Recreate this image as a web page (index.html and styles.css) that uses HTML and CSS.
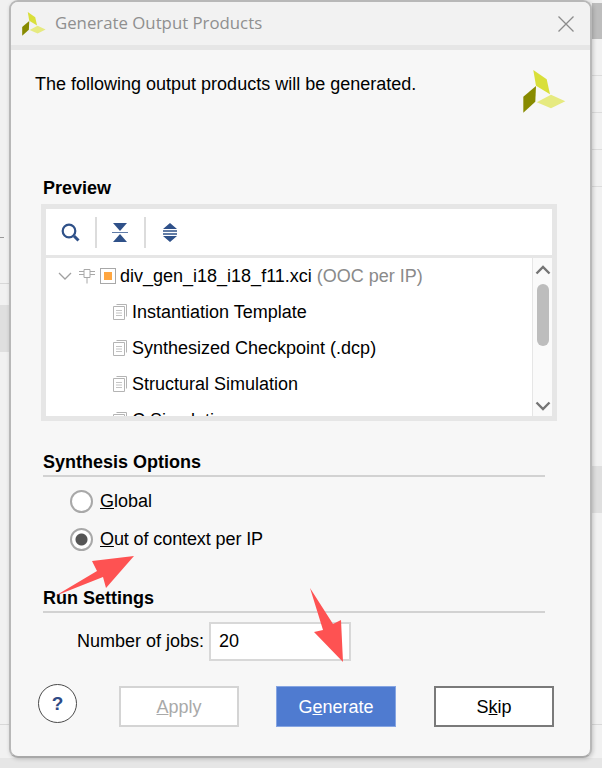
FILE: index.html
```html
<!DOCTYPE html>
<html lang="en">
<head>
	<meta charset="UTF-8">
	<title>Generate Output Products</title>
	<link rel="stylesheet" href="styles.css">
</head>
<body>
	<div class="dialog">
		<div class="titlebar">
			<svg class="title-logo" viewBox="0 0 43 43">
				<polygon fill="#d9df3a" points="10.3,0 23.7,9.3 27,24.3 13,15.7"/>
				<polygon fill="#878a00" points="13,16 12.3,31.7 .3,42.7 .3,26.7"/>
				<polygon fill="#e6ea80" points="13.7,32.3 28,24.7 42.3,31.3 28,38.3"/>
			</svg>
			<span class="title-text">Generate Output Products</span>
			<svg class="close-icon" viewBox="0 0 16 16">
				<path d="M0.5 0.5L15.5 15.5M15.5 0.5L0.5 15.5" stroke="#8c8c8c" stroke-width="1.3" fill="none"/>
			</svg>
		</div>

		<div class="content">
			<div class="intro">
				<p>The following output products will be generated.</p>
				<svg class="big-logo" viewBox="0 0 43 43">
					<polygon fill="#d9df3a" points="10.3,0 23.7,9.3 27,24.3 13,15.7"/>
					<polygon fill="#878a00" points="13,16 12.3,31.7 .3,42.7 .3,26.7"/>
					<polygon fill="#e6ea80" points="13.7,32.3 28,24.7 42.3,31.3 28,38.3"/>
				</svg>
			</div>

			<h2 class="preview-title">Preview</h2>
			<div class="preview">
				<div class="toolbar">
					<svg class="tool" viewBox="0 0 19 19">
						<circle cx="8" cy="8" r="6.3" fill="none" stroke="#2f5189" stroke-width="2.2"/>
						<path d="M13 13L17.5 17.5" stroke="#2f5189" stroke-width="3"/>
					</svg>
					<span class="tool-sep"></span>
					<svg class="tool tool-narrow" viewBox="0 0 16 19">
						<path d="M1 0H15L8 8ZM1 19H15L8 11Z" fill="#2f5189"/>
						<path d="M0 9.5H16" stroke="#5f7ba8" stroke-width="1.2"/>
					</svg>
					<span class="tool-sep tool-sep-wide"></span>
					<svg class="tool tool-narrow" viewBox="0 0 16 19">
						<path d="M8 0L15 6H1ZM8 19L15 13H1Z" fill="#2f5189"/>
						<path d="M1 8H15M1 11H15" stroke="#2f5189" stroke-width="1.3"/>
					</svg>
				</div>
				<div class="tree-wrap">
					<div class="tree">
						<div class="row root-row">
							<svg class="chevron" viewBox="0 0 14 8"><path d="M1 1L7 7L13 1" fill="none" stroke="#a0a0a0" stroke-width="1.3"/></svg>
							<svg class="chip" viewBox="0 0 16 16">
								<path d="M5 1.5H11V9.5H5ZM8 9.5V15.5M0 3.5H5M11 3.5H16M0 6.5H5M11 6.5H16" fill="none" stroke="#a8a8a8" stroke-width="1"/>
							</svg>
							<span class="ip-box"><span class="ip-dot"></span></span>
							<span>div_gen_i18_i18_f11.xci <span class="muted">(OOC per IP)</span></span>
						</div>
						<div class="row file-row"><svg class="doc" viewBox="0 0 14 16"><use href="#doc"/></svg>Instantiation Template</div>
						<div class="row file-row"><svg class="doc" viewBox="0 0 14 16"><use href="#doc"/></svg>Synthesized Checkpoint (.dcp)</div>
						<div class="row file-row"><svg class="doc" viewBox="0 0 14 16"><use href="#doc"/></svg>Structural Simulation</div>
						<div class="row file-row"><svg class="doc" viewBox="0 0 14 16"><use href="#doc"/></svg>C Simulation</div>
					</div>
					<div class="scrollbar">
						<svg class="arrow-btn" viewBox="0 0 16 10"><path d="M1.5 8.5L8 2L14.5 8.5" fill="none" stroke="#757575" stroke-width="2.4"/></svg>
						<div class="track"><div class="thumb"></div></div>
						<svg class="arrow-btn" viewBox="0 0 16 10"><path d="M1.5 1.5L8 8L14.5 1.5" fill="none" stroke="#757575" stroke-width="2.4"/></svg>
					</div>
				</div>
			</div>

			<h2 class="section synth">Synthesis Options</h2>
			<div class="radios">
				<div class="radio-row"><span class="radio"></span><span><u>G</u>lobal</span></div>
				<div class="radio-row"><span class="radio checked"></span><span class="tight"><u>O</u>ut of context per IP</span></div>
			</div>

			<h2 class="section run">Run Settings</h2>
			<div class="jobs">
				<span>Number of jobs:</span>
				<span class="jobs-input">20</span>
			</div>

			<div class="buttons">
				<span class="help">?</span>
				<span class="btn btn-apply"><u>A</u>pply</span>
				<span class="btn btn-generate">G<u>e</u>nerate</span>
				<span class="btn btn-skip">S<u>k</u>ip</span>
			</div>
		</div>
	</div>

	<svg class="annotations" width="602" height="768" viewBox="0 0 602 768">
		<polygon fill="#fe5252" points="55,596 97,571 92,561 134,556 106,588 103,577"/>
		<polygon fill="#fe5252" points="310,588 333,624 341,620 343,662 314,632 323,630"/>
	</svg>

	<svg width="0" height="0" class="defs">
		<defs>
			<g id="doc" fill="none" stroke="#b4b4b4" stroke-width="1">
				<path d="M3.5 .5H13.5V12.5"/>
				<path d="M.5 2.5H11.5V15.5H.5Z" fill="#fff"/>
				<path d="M3 6.5H9M3 9H9M3 11.5H9" stroke="#c4c4c4"/>
			</g>
		</defs>
	</svg>
</body>
</html>
```

FILE: styles.css
```css
html, body {
	margin: 0;
	padding: 0;
}

body {
	width: 602px;
	height: 768px;
	overflow: hidden;
	position: relative;
	font-family: "Liberation Sans", Arial, sans-serif;
	font-size: 18px;
	color: #000;
	background-color: #f1f1f1;
	/* the window behind the dialog, only its edges show */
	background-image:
		linear-gradient(#bdbdbd, #bdbdbd),
		linear-gradient(#dcdcdc, #dcdcdc),
		linear-gradient(#dcdcdc, #dcdcdc),
		linear-gradient(#dcdcdc, #dcdcdc),
		linear-gradient(#dcdcdc, #dcdcdc),
		linear-gradient(#dfdfdf, #dfdfdf),
		linear-gradient(#dfdfdf, #dfdfdf),
		linear-gradient(#d8d8d8, #d8d8d8),
		linear-gradient(#9a9a9a, #9a9a9a),
		linear-gradient(#d8d8d8, #d8d8d8),
		linear-gradient(#e6e6e6, #e6e6e6);
	background-repeat: no-repeat;
	background-size:
		10px 36px,
		10px 1px,
		10px 1px,
		10px 1px,
		10px 1px,
		10px 47px,
		10px 47px,
		10px 1px,
		4px 1px,
		602px 1px,
		602px 10px;
	background-position:
		592px 3px,
		592px 75px,
		592px 112px,
		592px 149px,
		592px 186px,
		592px 466px,
		0 305px,
		0 283px,
		0 237px,
		0 724px,
		0 758px;
}

.dialog {
	box-sizing: border-box;
	width: 583px;
	height: 758px;
	margin-left: 9px;
	display: flex;
	flex-direction: column;
	background: #f7f7f7;
	border: 2px solid #b8b8b8;
	border-bottom-color: #a8a8a8;
	border-radius: 9px;
	box-shadow: 1px 1px 4px rgba(0, 0, 0, 0.2);
	overflow: hidden;
}

.titlebar {
	flex: none;
	height: 43px;
	display: flex;
	align-items: center;
	padding-left: 11px;
	background: #f2f2f2;
	border-bottom: 5px solid #e6e6e6;
}

.title-logo {
	width: 24px;
	height: 24px;
	margin-right: 9px;
}

.title-text {
	font-family: "Open Sans", sans-serif;
	font-size: 16.8px;
	line-height: 20px;
	margin-top: -2px;
	color: #8f8f8f;
}

.close-icon {
	width: 16px;
	height: 16px;
	margin-left: auto;
	margin-right: 16px;
}

.content {
	flex: 1;
	display: flex;
	flex-direction: column;
	padding: 0 35px 0 30px;
}

.intro {
	height: 62px;
	margin-left: -6px;
	margin-right: -25px;
	padding-top: 20px;
	display: flex;
	justify-content: space-between;
}

.intro p {
	margin: 4px 0 0;
	line-height: 20px;
}

.big-logo {
	width: 43px;
	height: 43px;
	margin-right: 14px;
}

h2 {
	margin: 0;
	font-size: 18px;
	line-height: 20px;
	font-weight: bold;
}

.preview-title {
	margin-top: 46px;
	margin-left: 2px;
}

.preview {
	width: 516px;
	height: 217px;
	box-sizing: border-box;
	margin-top: 6px;
	border: 5px solid #e6e6e6;
	background: #e6e6e6;
}

.toolbar {
	height: 46px;
	display: flex;
	align-items: center;
	padding-left: 15px;
	background: #fff;
}

.tool {
	width: 19px;
	height: 19px;
}

.tool-narrow {
	width: 16px;
}

.tool-sep {
	width: 2px;
	height: 31px;
	margin: 0 15px;
	background: #dcdcdc;
}

.tool-sep-wide {
	margin: 0 16px;
}

.tree-wrap {
	height: 158px;
	margin-top: 3px;
	display: flex;
	overflow: hidden;
}

.tree {
	flex: 1;
	background: #fff;
	overflow: hidden;
}

.row {
	height: 36px;
	display: flex;
	align-items: center;
	white-space: pre;
}

.root-row {
	padding-left: 12px;
}

.file-row {
	padding-left: 67px;
}

.chevron {
	width: 14px;
	height: 8px;
	margin-right: 7px;
}

.chip {
	width: 16px;
	height: 16px;
	margin-right: 5px;
}

.ip-box {
	box-sizing: border-box;
	width: 16px;
	height: 16px;
	margin-right: 4px;
	display: flex;
	align-items: center;
	justify-content: center;
	border: 1px solid #a8a8a8;
	background: #fff;
}

.ip-dot {
	width: 8px;
	height: 8px;
	background: #ffa640;
}

.muted {
	color: #8a8a8a;
}

.doc {
	width: 14px;
	height: 16px;
	margin-right: 5px;
	flex: none;
}

.scrollbar {
	width: 19px;
	margin-left: 1px;
	background: #fafafa;
	display: flex;
	flex-direction: column;
	align-items: center;
}

.arrow-btn {
	flex: none;
	width: 16px;
	height: 10px;
	margin: 7px 0 5px;
}

.track {
	flex: 1;
	width: 100%;
	display: flex;
	justify-content: center;
}

.thumb {
	width: 12px;
	height: 62px;
	margin-top: 4px;
	border-radius: 6px;
	background: #bdbdbd;
}

.section {
	margin-left: 2px;
	margin-right: 10px;
	padding-bottom: 3px;
	border-bottom: 2px solid #d2d2d2;
}

.synth {
	margin-top: 31px;
}

.run {
	margin-top: 0;
}

.radios {
	height: 111px;
	box-sizing: border-box;
	padding: 5px 0 0 29px;
}

.radio-row {
	height: 38px;
	display: flex;
	align-items: center;
	gap: 7px;
}

.tight {
	letter-spacing: -0.1px;
}

.radio {
	box-sizing: border-box;
	width: 23px;
	height: 23px;
	border: 2px solid #a8a8a8;
	border-radius: 50%;
	background: #fff;
}

.radio.checked {
	background: radial-gradient(circle, #555 0, #555 5.5px, #fff 6.5px);
}

.jobs {
	margin-top: 9px;
	margin-left: 36px;
	display: flex;
	align-items: center;
	gap: 5px;
}

.jobs-input {
	box-sizing: border-box;
	width: 142px;
	height: 39px;
	padding-left: 8px;
	display: flex;
	align-items: center;
	background: #fff;
	border: 2px solid #d8d8d8;
}

.buttons {
	margin-top: 25px;
	margin-left: -3px;
	display: flex;
	align-items: center;
}

.help {
	box-sizing: border-box;
	width: 39px;
	height: 39px;
	margin-right: 42px;
	margin-top: -6px;
	display: flex;
	align-items: center;
	justify-content: center;
	border: 1px solid #4a4a4a;
	border-radius: 50%;
	background: #fff;
	color: #2f4a86;
	font-weight: bold;
	font-size: 19px;
}

.btn {
	box-sizing: border-box;
	width: 120px;
	height: 41px;
	padding-top: 1px;
	display: flex;
	align-items: center;
	justify-content: center;
	white-space: pre;
}

.btn-apply {
	color: #a9a9a9;
	background: #fff;
	border: 2px solid #d4d4d4;
}

.btn-generate {
	margin-left: 37px;
	color: #fff;
	background: #4f7bd0;
	border: 1px solid #86a5e2;
}

.btn-skip {
	margin-left: 38px;
	background: #fff;
	border: 2px solid #7a7a7a;
}

.annotations {
	position: absolute;
	left: 0;
	top: 0;
}

.defs {
	position: absolute;
}
```
